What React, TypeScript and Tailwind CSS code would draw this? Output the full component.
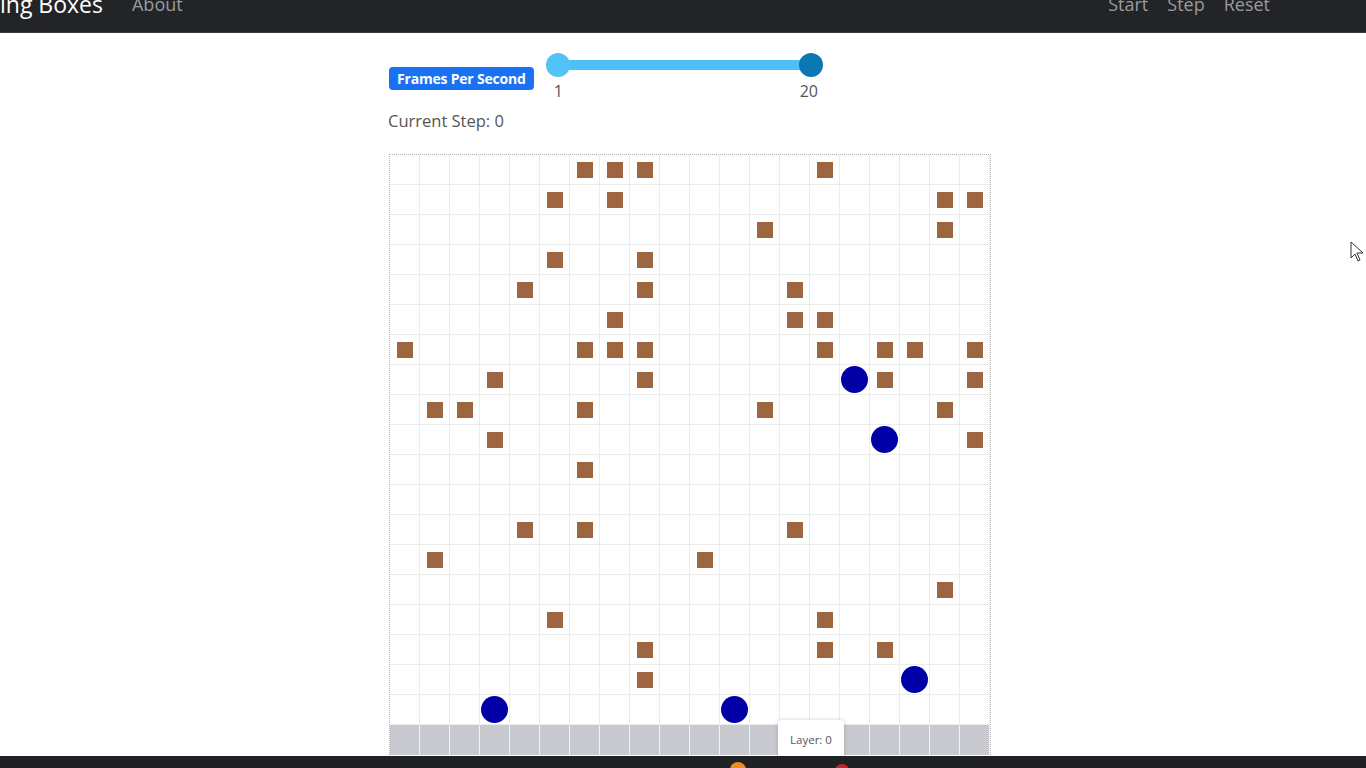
import React from "react";

const boxes: [number, number][] = [
  [0, 6], [0, 7], [0, 8], [0, 14],
  [1, 5], [1, 7], [1, 18], [1, 19],
  [2, 12], [2, 18],
  [3, 5], [3, 8],
  [4, 4], [4, 8], [4, 13],
  [5, 7], [5, 13], [5, 14],
  [6, 0], [6, 6], [6, 7], [6, 8], [6, 14], [6, 16], [6, 17], [6, 19],
  [7, 3], [7, 8], [7, 16], [7, 19],
  [8, 1], [8, 2], [8, 6], [8, 12], [8, 18],
  [9, 3], [9, 19],
  [10, 6],
  [12, 4], [12, 6], [12, 13],
  [13, 1], [13, 10],
  [14, 18],
  [15, 5], [15, 14],
  [16, 8], [16, 14], [16, 16],
  [17, 8],
];
const balls: [number, number][] = [
  [7, 15], [9, 16], [17, 17], [18, 3], [18, 11],
];

export default function App() {
  const boxSet = new Set(boxes.map(([r, c]) => `${r}-${c}`));
  const ballSet = new Set(balls.map(([r, c]) => `${r}-${c}`));
  const cells: React.ReactNode[] = [];
  for (let r = 0; r < 20; r++) {
    for (let c = 0; c < 20; c++) {
      const key = `${r}-${c}`;
      const floor = r === 19;
      cells.push(
        <div
          key={key}
          className={
            floor
              ? "w-[30px] h-[30px] bg-[#c9c9d0] border-r border-[#f2f2f4] flex items-center justify-center"
              : "w-[30px] h-[30px] border-r border-b border-[#ececec] flex items-center justify-center"
          }
        >
          {boxSet.has(key) && <div className="w-[16px] h-[16px] bg-[#9e6640]" />}
          {ballSet.has(key) && <div className="w-[27px] h-[27px] rounded-full bg-[#0000a6]" />}
        </div>
      );
    }
  }

  return (
    <div
      className="relative w-[1366px] h-[768px] overflow-hidden bg-white flex flex-col"
      style={{ fontFamily: '"Open Sans", "Noto Sans", sans-serif' }}
    >
      {/* navbar */}
      <div className="h-[33px] bg-[#222428] border-b border-[#3a3c40] flex items-start shrink-0 overflow-hidden">
        <div className="flex items-start -mt-[11px] w-full">
          <span className="text-[23px] leading-[30px] text-white">ing Boxes</span>
          <span className="ml-[29px] mt-[1px] text-[18px] leading-[28px] text-[#9a9b9e]">About</span>
          <div className="ml-auto mr-[96px] mt-[1px] flex gap-[19px] text-[18px] leading-[28px] text-[#9a9b9e]">
            <span>Start</span>
            <span>Step</span>
            <span>Reset</span>
          </div>
        </div>
      </div>

      {/* content */}
      <div className="flex flex-col pl-[389px] pt-[20px]">
        <div className="flex items-start h-[50px]">
          <span className="mt-[14px] h-[23px] px-[8px] rounded-[4px] bg-[#1a72f2] text-white text-[14px] font-bold leading-[23px] tracking-[-0.2px]">
            Frames Per Second
          </span>
          <div className="relative ml-[12px] w-[277px] h-[50px]">
            <div className="absolute left-[12px] top-[7px] w-[253px] h-[10px] rounded-full bg-[#4ec0f6]" />
            <div className="absolute left-0 top-0 w-[24px] h-[24px] rounded-full bg-[#52c3f7]" />
            <div className="absolute left-[253px] top-0 w-[24px] h-[24px] rounded-full bg-[#0b78b3]" />
            <span className="absolute left-[8px] top-[27px] text-[16px] leading-[22px] text-[#555]">1</span>
            <span className="absolute left-[254px] top-[27px] text-[16px] leading-[22px] text-[#555]">20</span>
          </div>
        </div>
        <div className="mt-[6px] -ml-[1px] text-[16.5px] leading-[24px] text-[#555]">Current Step: 0</div>

        <div className="relative mt-[21px] w-[602px] border border-dotted border-[#b5b5b5] border-b-0">
          <div className="grid grid-cols-[repeat(20,30px)]">{cells}</div>
          <div className="absolute left-[388px] top-[565px] w-[66px] h-[40px] bg-white rounded-t-[3px] shadow-[0_0_4px_rgba(0,0,0,0.2)] flex items-center justify-center text-[11.5px] text-[#555]">
            Layer: 0
          </div>
        </div>
      </div>

      {/* taskbar strip */}
      <div className="absolute left-0 bottom-0 w-full h-[12px] bg-[#202124]">
        <div className="absolute left-[730px] top-[6px] w-[16px] h-[16px] rounded-full bg-[#f08a24]" />
        <div className="absolute left-[835px] top-[8px] w-[14px] h-[14px] rounded-full bg-[#c0282e]" />
      </div>

      {/* cursor */}
      <svg className="absolute left-[1350px] top-[241px]" width="14" height="22" viewBox="0 0 14 22">
        <path d="M1 1 L1 17 L5 13 L8 20 L10 19 L7 12 L13 12 Z" fill="white" stroke="#333" strokeWidth="1" />
      </svg>
    </div>
  );
}
